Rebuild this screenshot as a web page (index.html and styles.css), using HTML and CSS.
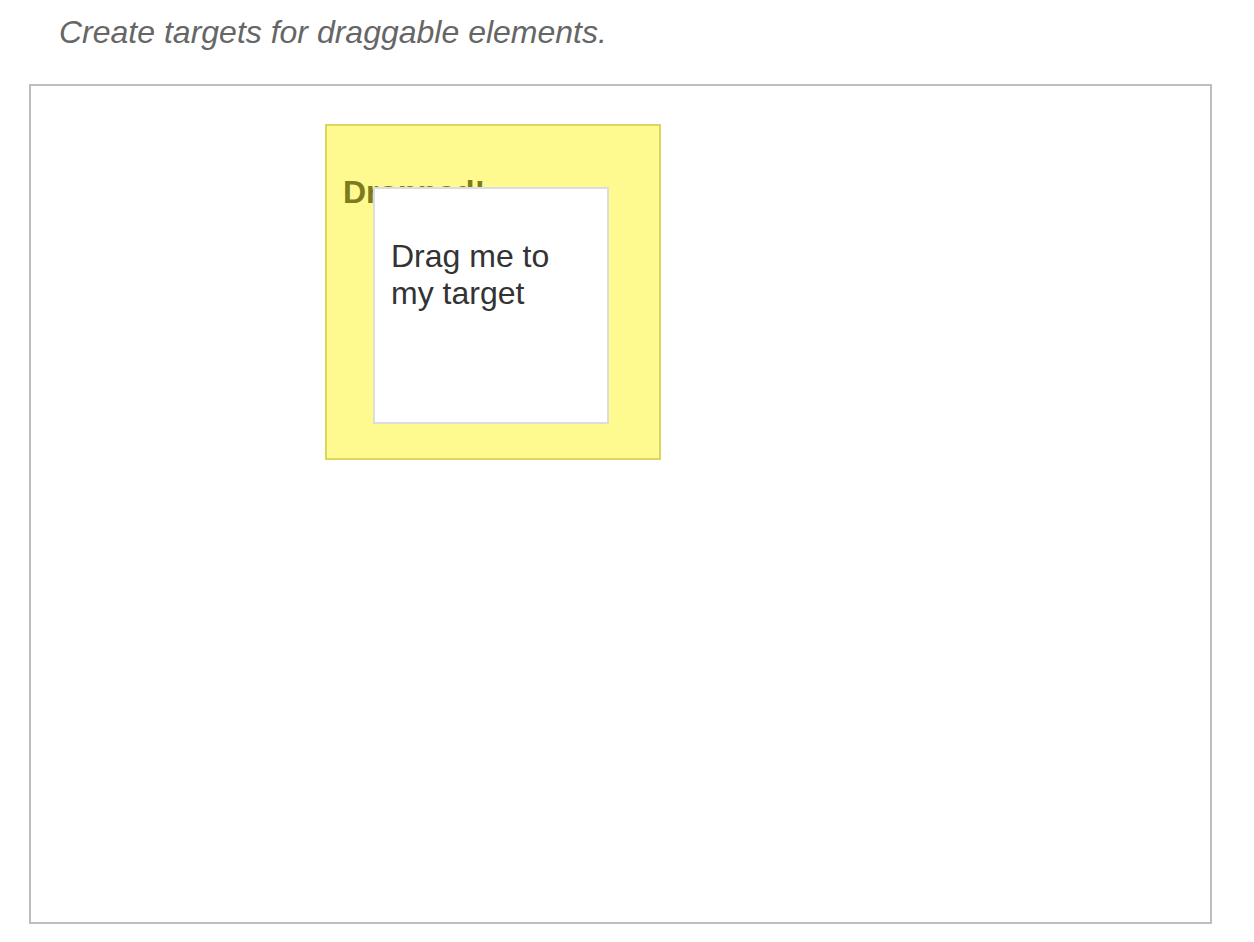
FILE: index.html
```
<!DOCTYPE html>
<html lang="en">
<head>
  <meta charset="UTF-8">
  <meta name="viewport" content="width=device-width, initial-scale=1.0">
  <title>Drop targets</title>
  <link rel="stylesheet" href="styles.css">
</head>
<body>
  <main class="page">
    <p class="lead">Create targets for draggable elements.</p>

    <div class="stage">
      <div class="target dropped">
        <h2>Dropped!</h2>
      </div>

      <div class="draggable">
        <p>Drag me to my target</p>
      </div>
    </div>
  </main>
</body>
</html>
```
FILE: styles.css
```
:root {
  --clr-border: #bdbdbd;
  --clr-lead: #666;
  --clr-text: #333;
  --clr-target: #fefa8f;
  --clr-target-border: #dcd65e;
  --clr-dropped: #7c7b1e;
}

* {
  padding: 0;
  margin: 0;
  box-sizing: border-box;
}

html {
  font-family: 'Liberation Sans', Arial, Helvetica, sans-serif;
  font-size: 32px;
  line-height: 1.15;
}

body {
  background-color: #fff;
  color: var(--clr-text);
}

.page {
  padding: 14px 42px 0 29px;
}

.lead {
  font-style: italic;
  color: var(--clr-lead);
  padding-left: 30px;
  margin-bottom: 33px;
}

.stage {
  position: relative;
  width: 1183px;
  height: 840px;
  border: 2px solid var(--clr-border);
  padding: 38px 0 0 294px;
}

.target {
  width: 336px;
  height: 336px;
  background-color: var(--clr-target);
  border: 2px solid var(--clr-target-border);
  padding: 48px 16px 16px;
}

.target h2 {
  font-size: 32px;
  font-weight: 700;
  color: var(--clr-dropped);
}

.draggable {
  position: absolute;
  left: 342px;
  top: 101px;
  width: 236px;
  height: 237px;
  background-color: #fff;
  border: 2px solid #ddd;
  padding: 49px 16px 16px;
}
```
